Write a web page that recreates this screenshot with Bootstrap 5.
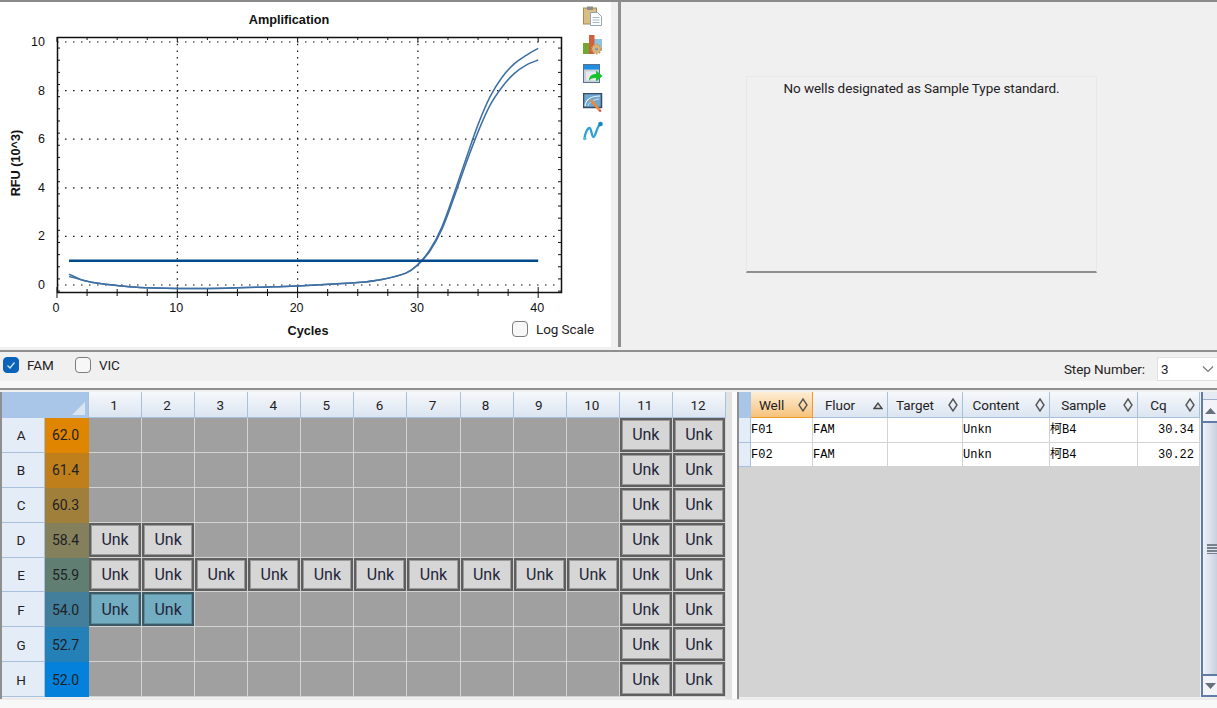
<!DOCTYPE html>
<html lang="en">
<head>
    <meta charset="UTF-8">
    <meta name="viewport" content="width=device-width, initial-scale=1.0">
    <title>Amplification</title>
    <link href="https://cdn.jsdelivr.net/npm/bootstrap@5.3.0/dist/css/bootstrap.min.css" rel="stylesheet">
    <script src="https://cdn.jsdelivr.net/npm/bootstrap@5.3.0/dist/js/bootstrap.bundle.min.js"></script>
    <style>
        html, body { height: 708px; overflow: hidden; }
        body { background: #f0f0f0; color: #1f2124; font-family: Roboto, "Noto Sans", sans-serif; font-size: 13.5px; letter-spacing: -0.08px; }
        .top-area { height: 352px; border-top: 2px solid #8a8a8a; border-bottom: 2px solid #8f8f8f; padding-bottom: 3px; }
        .chart-pane { width: 611px; background: #fff; }
        .chart-svg { flex: none; }
        .chart-svg text { font-family: "Liberation Sans", Arial, sans-serif; fill: #111; letter-spacing: 0; }
        .tool-col { gap: 9px; padding-top: 4px; }
        .log-toggle { position: absolute; left: 512px; top: 319px; gap: 8px; line-height: 16px; }
        .pane-split { width: 10px; border-right: 3px solid #8f8f8f; }
        .std-pane { flex: 1; padding: 74px 0 0 125px; }
        .std-box { width: 351px; height: 197px; border: 1px solid #e8e8e8; border-bottom: 2px solid #8f8f8f; text-align: center; padding-top: 1px; line-height: 20px; }
        .fluor-bar { height: 36px; padding: 5px 0 0 3px; background: linear-gradient(#f0f0f0 29px, #f8f8f8 29px); }
        .fluor-item { width: 72px; gap: 8px; line-height: 16px; }
        .check-box { width: 16px; height: 16px; border: 1px solid #7d7d7d; border-radius: 4px; background: #f7f7f7; display: flex; align-items: center; justify-content: center; }
        .check-box.is-on { background: #0a63b8; border-color: #0a63b8; }
        .step-label { margin-left: auto; margin-right: 12px; line-height: 24px; }
        .step-field { width: 60px; height: 24px; background: #fff; border: 1px solid #e2e2e2; border-right: 0; padding: 0 3px; line-height: 22px; justify-content: space-between; align-items: center; }
        .bottom-area { height: 310px; border-top: 2px solid #8f8f8f; padding-top: 2px; }
        .plate-pane { width: 726px; height: 307px; border-left: 2px solid #8f8f8f; }
        .plate-grid { display: grid; grid-template-columns: 43px 44px repeat(12, 53.08px); grid-template-rows: 26px repeat(8, 34.9px); background: #a0a0a0; width: 724px; }
        .head-cell { display: flex; align-items: center; justify-content: center; padding: 1px 2px 0 0; background: linear-gradient(#f6f8fb, #dbe5f1); border-right: 1px solid #a9c0dc; border-bottom: 1px solid #a9c0dc; }
        .corner-cell { grid-column: span 2; background: #a9c6e9; position: relative; border-right: 1px solid #a9c0dc; }
        .corner-cell::after { content: ""; position: absolute; right: 3px; bottom: 3px; border-style: solid; border-width: 0 0 13px 13px; border-color: transparent transparent #dbe5f1 transparent; }
        .row-cell { display: flex; align-items: center; justify-content: center; padding: 1px 4px 0 0; background: #e4ecf8; border-right: 1px solid #a9c0dc; border-bottom: 1px solid #a9c0dc; }
        .temp-cell { display: flex; align-items: center; justify-content: center; padding: 1px 3px 0 0; font-size: 14px; }
        .well-cell { border-right: 1px solid #d3d3d3; border-bottom: 1px solid #d3d3d3; background: #a0a0a0; display: flex; }
        .well-unk { flex: 1; padding-top: 1px; background: #d6d6d6; border: 2px solid #5f5f5f; outline: 1px solid #9a9a9a; outline-offset: -3px; display: flex; align-items: center; justify-content: center; font-size: 16px; letter-spacing: 0; color: #23263a; }
        .well-hit { background: #72adc2; border-color: #3c5a66; outline-color: #5f8d9e; }
        .pane-gap { width: 13px; height: 307px; background: linear-gradient(90deg, #e2e2e2 6px, #fbfbfb 6px); border-right: 2px solid #8f8f8f; }
        .list-body { width: 461px; height: 305px; background: #d3d3d3; }
        .list-head, .list-row { display: grid; grid-template-columns: 12px 62px 75px 75px 87px 88px 62px; }
        .list-head { height: 26px; }
        .list-row { height: 24.5px; }
        .lhead-cell { display: flex; align-items: center; padding: 1px 4px 0 0; background: linear-gradient(#f6f8fb, #dbe5f1); border-right: 1px solid #a9c0dc; border-bottom: 1px solid #a9c0dc; }
        .lhead-cell span { flex: 1; text-align: center; padding-right: 6px; }
        .lhead-on { background: linear-gradient(#fdeed6, #f7c27a); border-color: #f09a2a; }
        .lhead-stub { background: #a9c6e9; }
        .lstub-cell { background: #e4ecf8; border-right: 1px solid #a9c0dc; border-bottom: 1px solid #a9c0dc; }
        .data-cell { background: #fff; border-right: 1px solid #d3d3d3; border-bottom: 1px solid #d3d3d3; font-family: "Liberation Mono", "Noto Sans CJK SC", monospace; font-size: 12px; letter-spacing: 0; color: #000; padding: 1px 1px 0 0; display: flex; align-items: center; }
        .data-num { justify-content: flex-end; padding-right: 5px; }
        .sort-mark { flex: none; }
        .scroll-track { width: 16px; height: 305px; margin-left: 1px; border-left: 2px solid #5f7ba8; background: linear-gradient(90deg, #eef1f7, #c9d1e0); justify-content: space-between; }
        .scroll-cap { height: 8px; background: #e6eaf2; border-bottom: 1px solid #9fb0cc; }
        .scroll-btn { height: 23px; background: #f2f4f8; display: flex; align-items: center; justify-content: center; }
        .scroll-up { border-bottom: 2px solid #5f7ba8; }
        .scroll-down { border-top: 2px solid #5f7ba8; border-bottom: 2px solid #5f7ba8; }
        .scroll-grip { width: 10px; height: 10px; margin-left: 4px; background: repeating-linear-gradient(#78828f 0 2px, #dfe4ec 2px 3px); }
        .scroll-rail { flex: 1; display: flex; align-items: center; }
        .foot-bar { height: 10px; background: linear-gradient(#ebebeb 2px, #f8f8f8 2px); }
    </style>
</head>
<body>
    <div class="top-area d-flex">
        <div class="chart-pane d-flex position-relative">
            <svg id="chart" class="chart-svg" width="583" height="345" viewBox="0 2 583 345"></svg>
            <div class="tool-col d-flex flex-column">
                <svg width="20" height="20" viewBox="0 0 20 20"><rect x="0.5" y="2" width="13" height="16" fill="#d8bd85" stroke="#a58a58"/><rect x="4" y="0.5" width="6" height="3.5" fill="#8c8c8c"/><path d="M7.5 6.5h7l4 4v9h-11z" fill="#fff" stroke="#93a5bd"/><path d="M9.5 11.5h7M9.5 14h7M9.5 16.5h7" stroke="#a8b8cc"/></svg>
                <svg width="20" height="20" viewBox="0 0 20 20"><rect x="11" y="4" width="8" height="12" fill="#8cc6e4"/><rect x="0" y="8" width="6" height="11" fill="#72a832"/><rect x="6" y="0" width="5.5" height="19" fill="#d0603f"/><circle cx="13.5" cy="14" r="4.6" fill="#d9b77c"/><circle cx="13.5" cy="14" r="4.6" fill="none" stroke="#c39a58" stroke-width="1.6" stroke-dasharray="1.6 1.4"/><circle cx="13.5" cy="14" r="1.6" fill="#8f9aa8"/></svg>
                <svg width="20" height="20" viewBox="0 0 20 20"><rect x="0.5" y="0.5" width="16" height="18" fill="#c9d0dc" stroke="#5b7191"/><rect x="1" y="1" width="15" height="4.5" fill="#1e8fe0"/><rect x="3" y="7.5" width="11" height="9" fill="#e6eaf0"/><path d="M6 17c0-5 2.500-7 7-7V6.500l6.500 5.500-6.500 5.500V14c-3 0-5 0-7 3z" fill="#18c32c"/></svg>
                <svg width="20" height="19" viewBox="0 0 20 19"><rect x="0.500" y="0.500" width="18" height="14" fill="#6fa7cf" stroke="#3a4a66" stroke-width="1.500"/><path d="M2 13c1-7 7-10 15-10" fill="none" stroke="#e8f2f8" stroke-width="1.200"/><path d="M5 13c1-4 5-6 11-7" fill="none" stroke="#d4e6f2"/><path d="M9 6l9 11-2 1.500L7 8z" fill="#ee8a3a"/><path d="M16 17l2 0 .5 1.500-2 .5z" fill="#c9405a"/></svg>
                <svg width="20" height="20" viewBox="0 0 20 20"><path d="M1.500 18c0-5 3-11 5-11s2 9 4 9 3-9 6-12" fill="none" stroke="#2ea1d1" stroke-width="2.300" stroke-linecap="round"/><circle cx="17.500" cy="3" r="2.300" fill="#1587bd"/><circle cx="2" cy="17.500" r="1.600" fill="#59bbdf"/></svg>
            </div>
            <div class="log-toggle d-flex"><span class="check-box"></span><span>Log Scale</span></div>
        </div>
        <div class="pane-split"></div>
        <div class="std-pane">
            <div class="std-box">No wells designated as Sample Type standard.</div>
        </div>
    </div>
    <div class="fluor-bar d-flex align-items-start">
        <div class="fluor-item d-flex"><span class="check-box is-on"><svg width="10" height="10" viewBox="0 0 10 10"><path d="M1.500 5.500 4 8 8.500 2.500" fill="none" stroke="#cfe3f7" stroke-width="1.300"/></svg></span><span>FAM</span></div>
        <div class="fluor-item d-flex"><span class="check-box"></span><span>VIC</span></div>
        <span class="step-label">Step Number:</span>
        <span class="step-field d-flex"><span>3</span><svg width="12" height="8" viewBox="0 0 12 8"><path d="M1 1.500 6 6.500 11 1.500" fill="none" stroke="#777" stroke-width="1.200"/></svg></span>
    </div>
    <div class="bottom-area d-flex">
        <div class="plate-pane"><div class="plate-grid" id="plate"></div></div>
        <div class="pane-gap"></div>
        <div class="list-body" id="list"></div>
        <div class="scroll-track d-flex flex-column">
            <div class="scroll-cap"></div>
            <div class="scroll-btn scroll-up"><svg width="11" height="6" viewBox="0 0 11 6"><path d="M5.500 0 11 6H0z" fill="#68707e"/></svg></div>
            <div class="scroll-rail"><div class="scroll-grip"></div></div>
            <div class="scroll-btn scroll-down"><svg width="11" height="6" viewBox="0 0 11 6"><path d="M0 0h11L5.500 6z" fill="#68707e"/></svg></div>
        </div>
    </div>
    <div class="foot-bar"></div>
    <script>
        const chart = document.getElementById("chart");
        const px = c => 57 + c * 12.03;
        const py = v => 285 - v * 24.3;

        // smooth line through the data points
        function smooth(pts) {
            const p = pts.map(a => [px(a[0]), py(a[1])]);
            let d = `M${p[0][0]} ${p[0][1]}`;
            for (let i = 0; i < p.length - 1; i++) {
                const a = p[i - 1] || p[i], b = p[i], c = p[i + 1], e = p[i + 2] || c;
                d += `C${b[0] + (c[0] - a[0]) / 6} ${b[1] + (c[1] - a[1]) / 6} ${c[0] - (e[0] - b[0]) / 6} ${c[1] - (e[1] - b[1]) / 6} ${c[0]} ${c[1]}`;
            }
            return d;
        }

        let s = "";
        [10, 20, 30].forEach(c => s += `<line x1="${px(c)}" x2="${px(c)}" y1="37" y2="292" stroke="#111" stroke-width="1.200" stroke-dasharray="1.500 5.200"/>`);
        [0, 2, 4, 6, 8, 10].forEach(v => s += `<line x1="57" x2="561" y1="${py(v)}" y2="${py(v)}" stroke="#111" stroke-width="1.200" stroke-dasharray="1.500 6.500"/>`);
        s += `<rect x="57.500" y="37.500" width="504" height="255" fill="none" stroke="#111" stroke-width="1.500"/>`;
        for (let c = 0; c <= 42; c += 2.5) {
            const big = c % 10 === 0;
            s += `<line x1="${px(c)}" x2="${px(c)}" y1="${big ? 287 : 289}" y2="${big ? 298 : 296}" stroke="#111"/>`;
            s += `<line x1="${px(c)}" x2="${px(c)}" y1="37" y2="${big ? 42 : 40}" stroke="#111"/>`;
        }
        for (let v = -0.25; v <= 10.2; v += 0.5) {
            s += `<line x1="57" x2="60" y1="${py(v)}" y2="${py(v)}" stroke="#111"/>`;
            s += `<line x1="561" x2="558" y1="${py(v)}" y2="${py(v)}" stroke="#111"/>`;
        }
        [0, 10, 20, 30, 40].forEach(c => s += `<text x="${px(c) - 1}" y="312" font-size="12.500" text-anchor="middle">${c}</text>`);
        [0, 2, 4, 6, 8, 10].forEach(v => s += `<text x="45" y="${py(v) + 4}" font-size="12.500" text-anchor="end">${v}</text>`);
        s += `<text x="289" y="24" font-size="12.700" font-weight="bold" text-anchor="middle">Amplification</text>`;
        s += `<text x="308" y="335" font-size="12.700" font-weight="bold" text-anchor="middle">Cycles</text>`;
        s += `<text transform="translate(20 163) rotate(-90)" font-size="12.700" font-weight="bold" text-anchor="middle">RFU (10^3)</text>`;
        const base = [[2, .22], [3, .1], [4, .03], [6, -.07], [8, -.12], [10, -.14], [14, -.13], [18, -.07], [20, -.04], [23, .04], [25, .1], [27, .23], [29, .49]];
        const c1 = [[1, .45], ...base, [30, .85], [31, 1.45], [32, 2.4], [33, 3.75], [34, 5.2], [35, 6.6], [36, 7.75], [37, 8.55], [38, 9.1], [39, 9.45], [40, 9.74]];
        const c2 = [[1, .35], ...base, [30, .83], [31, 1.4], [32, 2.3], [33, 3.6], [34, 5], [35, 6.3], [36, 7.4], [37, 8.15], [38, 8.7], [39, 9.05], [40, 9.26]];
        [c1, c2].forEach(c => s += `<path d="${smooth(c)}" fill="none" stroke="#3d6fa3" stroke-width="1.500"/>`);
        s += `<line x1="${px(1)}" x2="${px(40)}" y1="${py(1)}" y2="${py(1)}" stroke="#00498c" stroke-width="2.500"/>`;
        chart.innerHTML = s;

        const temps = [["62.0", "#df8500"], ["61.4", "#bf801c"], ["60.3", "#9f7f3a"], ["58.4", "#84805c"], ["55.9", "#607f72"], ["54.0", "#437f9b"], ["52.7", "#2480b7"], ["52.0", "#0481db"]];
        const hits = { D: [1, 2], E: [1, 2, 3, 4, 5, 6, 7, 8, 9, 10], F: [1, 2] };
        let h = '<div class="corner-cell"></div>';
        for (let c = 1; c <= 12; c++) h += `<div class="head-cell">${c}</div>`;
        "ABCDEFGH".split("").forEach((r, i) => {
            h += `<div class="row-cell">${r}</div><div class="temp-cell" style="background:${temps[i][1]}">${temps[i][0]}</div>`;
            for (let c = 1; c <= 12; c++) {
                const on = c > 10 || (hits[r] || []).includes(c);
                h += `<div class="well-cell">${on ? `<div class="well-unk${r === "F" && c < 3 ? " well-hit" : ""}">Unk</div>` : ""}</div>`;
            }
        });
        document.getElementById("plate").innerHTML = h;

        const cols = ["Well", "Fluor", "Target", "Content", "Sample", "Cq"];
        let l = '<div class="list-head"><div class="lhead-stub"></div>';
        cols.forEach((c, i) => l += `<div class="lhead-cell${i === 0 ? " lhead-on" : ""}"><span>${c}</span><svg class="sort-mark" width="10" height="14" viewBox="0 0 10 14">${i === 1 ? '<path d="M1 10.500 5 5 9 10.500z" fill="#ddd" stroke="#444" stroke-width="1.300"/>' : '<path d="M5 1 9 7 5 13 1 7z" fill="none" stroke="#555" stroke-width="1.400"/>'}</svg></div>`);
        l += "</div>";
        [["F01", "FAM", "", "Unkn", "柯B4", "30.34"], ["F02", "FAM", "", "Unkn", "柯B4", "30.22"]].forEach(r => {
            l += '<div class="list-row"><div class="lstub-cell"></div>';
            r.forEach((v, i) => l += `<div class="data-cell${i === 5 ? " data-num" : ""}">${v}</div>`);
            l += "</div>";
        });
        document.getElementById("list").innerHTML = l;
    </script>
</body>
</html>
